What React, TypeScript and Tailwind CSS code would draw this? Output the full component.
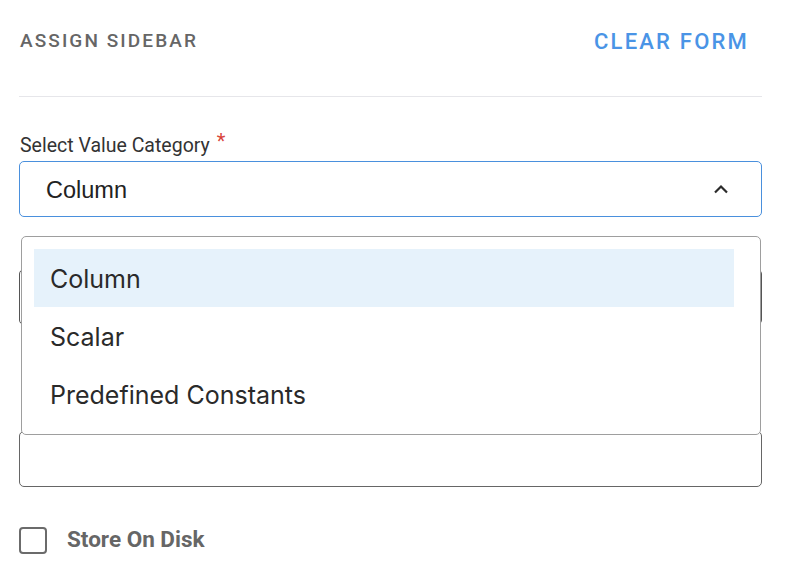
const options = ["Column", "Scalar", "Predefined Constants"];

function ChevronUp() {
  return (
    <svg width="16" height="12" viewBox="0 0 16 12" fill="none">
      <path d="M2 9.5 L8 3.5 L14 9.5" stroke="#2b2b2b" strokeWidth="2.2" />
    </svg>
  );
}

export default function App() {
  const selected = "Column";

  return (
    <div className="relative w-[786px] h-[574px] bg-white overflow-hidden font-['Roboto',sans-serif]">
      <div className="pl-[19px] pr-[24px]">
        <div className="flex items-center justify-between h-[82px]">
          <span className="pl-px text-[19px] font-medium tracking-[0.11em] text-[#666666]">ASSIGN SIDEBAR</span>
          <button className="mr-[13px] text-[22px] font-medium tracking-[0.1em] text-[#4a94e6]">CLEAR FORM</button>
        </div>
        <div className="mt-[14px] h-px bg-[#e6e6ea]" />

        <div className="mt-[37px] h-[24px] flex items-center text-[19.5px] text-[#333333] pl-px">
          Select Value Category
          <span className="ml-[7px] -mt-[10px] text-[20px] text-[#d8453b]">*</span>
        </div>
        <div className="mt-[3px] h-[56px] flex items-center justify-between border border-[#4a90dd] rounded-[5px] pl-[26px] pr-[32px] pt-[3px]">
          <span className="text-[23.5px] text-[#222222] font-['Liberation_Sans',sans-serif]">{selected}</span>
          <span className="-mt-[3px]">
            <ChevronUp />
          </span>
        </div>

        <div className="mt-[52px] h-[56px] border border-[#555555] rounded-[5px]" />

        <div className="mt-[106px] h-[56px] border border-[#666666] rounded-[5px]" />

        <label className="mt-[38px] flex items-center">
          <span className="w-[28px] h-[27px] border-2 border-[#6b6b6b] rounded-[4px]" />
          <span className="ml-[20px] text-[22.5px] font-bold text-[#666666] -mt-[2px]">Store On Disk</span>
        </label>
      </div>

      <div className="absolute left-[21px] top-[236px] w-[740px] h-[199px] bg-white border border-[#9e9e9e] rounded-[5px] pt-[12px] pl-[12px] pr-[26px]">
        {options.map((o) => (
          <div
            key={o}
            className={`h-[58px] flex items-center px-[16px] pt-[4px] text-[25px] text-[#2a2a2a] font-['Inter',sans-serif] ${
              o === selected ? "bg-[#e6f2fb]" : ""
            }`}
          >
            {o}
          </div>
        ))}
      </div>
    </div>
  );
}
